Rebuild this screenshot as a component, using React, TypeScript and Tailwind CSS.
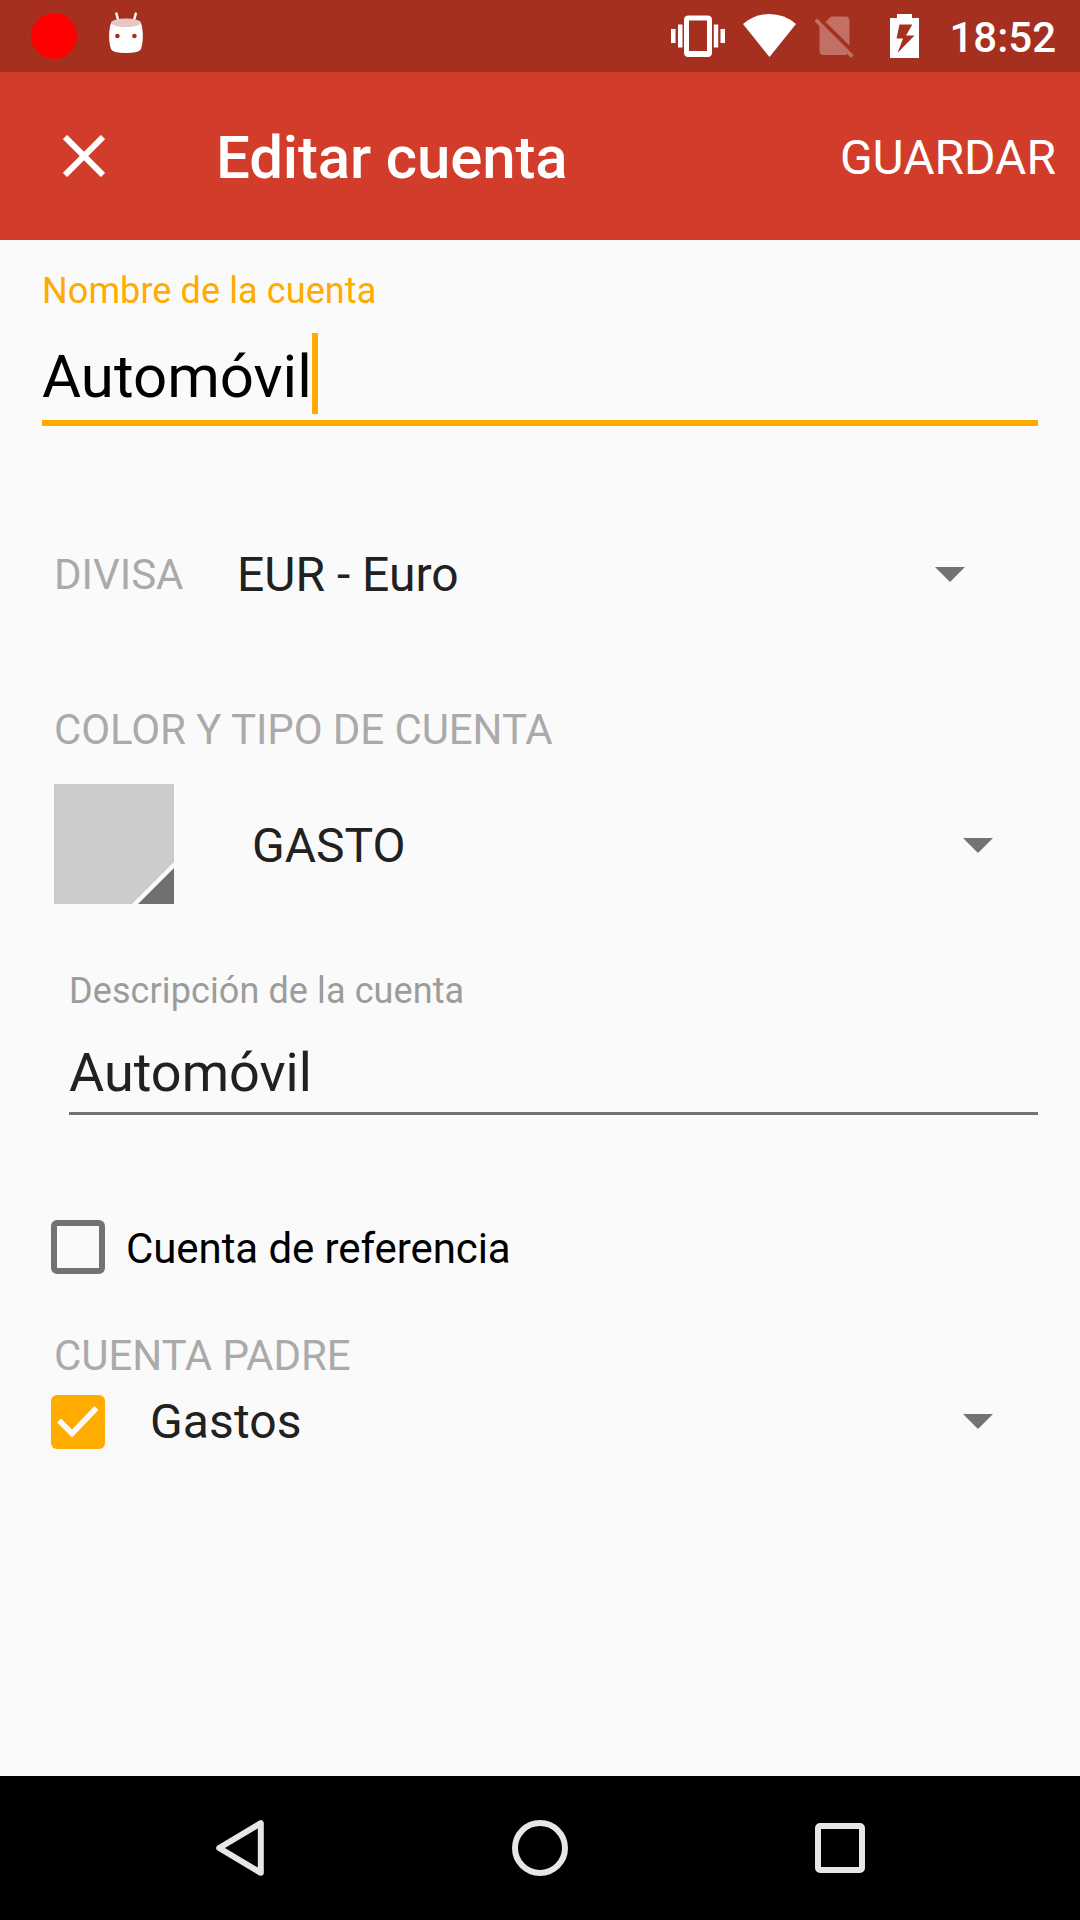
import type { ReactNode } from "react";

type GlyphProps = { viewBox: string; className: string; children: ReactNode };

function Glyph({ viewBox, className, children }: GlyphProps) {
  return (
    <svg viewBox={viewBox} className={`block shrink-0 ${className}`} fill="currentColor" aria-hidden="true">
      {children}
    </svg>
  );
}

function StatusBar() {
  return (
    <div className="flex h-[72px] items-start bg-[#a53020] text-white">
      <div className="mt-[13px] ml-[31px] size-[46px] rounded-full bg-[#ff0000]" />
      <Glyph viewBox="0 0 36 44" className="mt-[11px] ml-[31px] h-[44px] w-[36px]">
        <path d="M8.4 2.6 10.4 10M27.8 2.6 25.8 10" stroke="currentColor" strokeWidth="2.4" strokeLinecap="round" fill="none" />
        <path d="M3 12Q18 19 33 12C35.500 20 35.500 30 33 38Q31.500 42 18 42Q4.500 42 3 38C.5 30 .5 20 3 12Z" />
        <ellipse cx="18" cy="11.700" rx="15" ry="4.200" fill="#e8c6c3" />
        <circle cx="9.400" cy="25" r="2.300" fill="#a53020" />
        <circle cx="26.400" cy="25" r="2.300" fill="#a53020" />
      </Glyph>

      <Glyph viewBox="0 0 54 42" className="mt-[15px] ml-auto h-[42px] w-[54px]">
        <path d="M0 14h4.500v14H0zM7 9.500h4.500v23H7zM42.800 9.500h4.400v23h-4.400zM49.500 14H54v14h-4.500z" />
        <path fillRule="evenodd" d="M17.500.5h19Q41 .5 41 5v32.500q0 4.500-4.500 4.500h-19q-4.500 0-4.500-4.500V5q0-4.500 4.500-4.500ZM18 5.500v30.500h18V5.500Z" />
      </Glyph>
      <Glyph viewBox="0 0 53 43" className="mt-[14px] ml-[18px] h-[43px] w-[53px]">
        <path d="M26.500 43 0 10Q11.500 0 26.500 0T53 10Z" />
      </Glyph>
      <Glyph viewBox="0 0 40 43" className="mt-[16px] ml-[18px] h-[43px] w-[40px] text-[#c26f64]">
        <path d="M.5 5 3 2.500 39.500 39 37 42 33.500 38.300Q32.500 39 31 39H10q-4.500 0-4.500-4.500V10.200Z" />
        <path d="M11.500 6 17 .5h14.500Q35.500.5 35.500 4.500V29.500Z" />
      </Glyph>
      <Glyph viewBox="0 0 29 44" className="mt-[14px] ml-[36px] h-[44px] w-[29px]">
        <path fillRule="evenodd" d="M7 0h15v4h7v40H0V4h7ZM9.500 10.500 6.500 24.500h6.500L7.500 39 24.500 21.500h-8.500L22.300 10.500Z" />
      </Glyph>
      <div className="mr-[24px] ml-[30px] pt-[2px] text-[42px] leading-[72px] font-medium">18:52</div>
    </div>
  );
}

function AppBar() {
  return (
    <header className="flex h-[168px] items-center bg-[#d13d2a] text-white">
      <Glyph viewBox="0 0 42 42" className="ml-[63px] size-[42px]">
        <path d="m2 2 38 38M40 2 2 40" stroke="currentColor" strokeWidth="6" />
      </Glyph>
      <h1 className="ml-[111px] pt-[4px] text-[60px] leading-[72px] font-medium tracking-[-0.15px]">Editar cuenta</h1>
      <button className="mr-[24px] ml-auto pt-[3px] text-[48px] leading-[60px]">GUARDAR</button>
    </header>
  );
}

function Caret() {
  return (
    <Glyph viewBox="0 0 30 15" className="h-[15px] w-[30px] text-[#737373]">
      <path d="M0 0h30L15 15Z" />
    </Glyph>
  );
}

function SectionLabel({ children }: { children: ReactNode }) {
  return <div className="pl-[54px] text-[42px] leading-[50px] tracking-[-0.08px] text-[#aaaaaa]">{children}</div>;
}

function NavBar() {
  return (
    <nav className="flex h-[144px] items-center justify-center bg-black text-[#e6e6e6]">
      <div className="flex w-[300px] justify-center">
        <Glyph viewBox="0 0 48 56" className="h-[56px] w-[48px]">
          <path d="M44.800 3.200v49.600L3.200 28Z" fill="none" stroke="currentColor" strokeWidth="6" strokeLinejoin="round" />
        </Glyph>
      </div>
      <div className="flex w-[300px] justify-center">
        <div className="size-[56px] rounded-full border-[6px] border-[#e6e6e6]" />
      </div>
      <div className="flex w-[300px] justify-center">
        <div className="size-[50px] rounded-[5px] border-[6px] border-[#e6e6e6]" />
      </div>
    </nav>
  );
}

export default function App() {
  return (
    <div className="flex h-[1920px] w-[1080px] flex-col overflow-hidden bg-[#fafafa] font-['Roboto',sans-serif] text-[#212121]">
      <StatusBar />
      <AppBar />

      <main className="flex flex-1 flex-col">
        <div className="mt-[30px] mr-[42px] ml-[42px]">
          <div className="text-[36px] leading-[42px] tracking-[0.1px] text-[#ffab00]">Nombre de la cuenta</div>
          <div className="mt-[21px] flex h-[81px] text-black">
            <span className="text-[60px] leading-[87px]">Automóvil</span>
            <span className="h-[81px] w-[6px] bg-[#ffab00]" />
          </div>
          <div className="mt-[6px] h-[6px] bg-[#ffab00]" />
        </div>

        <div className="mt-[121px] flex h-[56px] items-center pr-[115px] pl-[54px]">
          <span className="w-[183px] text-[42px] leading-[56px] text-[#aaaaaa]">DIVISA</span>
          <span className="flex-1 text-[48px] leading-[56px]">EUR - Euro</span>
          <div className="pb-[2px]">
            <Caret />
          </div>
        </div>

        <div className="mt-[102px]">
          <SectionLabel>COLOR Y TIPO DE CUENTA</SectionLabel>
        </div>
        <div className="mt-[29px] flex h-[120px] pr-[87px] pl-[54px]">
          <div className="flex size-[120px] items-end justify-end bg-[#cccccc]">
            <Glyph viewBox="0 0 42 42" className="size-[42px]">
              <path d="M0 42 42 0v42Z" fill="#fafafa" />
              <path d="M6 42 42 6v36Z" fill="#707070" />
            </Glyph>
          </div>
          <div className="ml-[78px] flex flex-1 items-center justify-between pt-[3px]">
            <span className="text-[48px] leading-[56px]">GASTO</span>
            <Caret />
          </div>
        </div>

        <div className="mt-[66px] mr-[42px] ml-[69px]">
          <div className="text-[36px] leading-[42px] tracking-[0.1px] text-[#9c9c9c]">Descripción de la cuenta</div>
          <div className="mt-[29px] text-[54px] leading-[64px]">Automóvil</div>
          <div className="mt-[7px] h-[3px] bg-[#737373]" />
        </div>

        <div className="mt-[105px] flex h-[54px] items-center pl-[51px]">
          <div className="size-[54px] rounded-[6px] border-[6px] border-[#737373]" />
          <span className="ml-[21px] pt-[3px] text-[42px] leading-[50px] tracking-[-0.08px] text-black">Cuenta de referencia</span>
        </div>

        <div className="mt-[57px]">
          <SectionLabel>CUENTA PADRE</SectionLabel>
        </div>
        <div className="mt-[14px] flex h-[54px] items-center pr-[87px] pl-[51px]">
          <div className="size-[54px] rounded-[6px] bg-[#ffab00] text-[#fafafa]">
            <Glyph viewBox="0 0 54 54" className="size-[54px]">
              <path d="m8 25.500 13 13L45.500 13" fill="none" stroke="currentColor" strokeWidth="5.600" />
            </Glyph>
          </div>
          <span className="ml-[45px] flex-1 text-[48px] leading-[56px] tracking-[0.1px]">Gastos</span>
          <div className="pb-px">
            <Caret />
          </div>
        </div>
      </main>

      <NavBar />
    </div>
  );
}
